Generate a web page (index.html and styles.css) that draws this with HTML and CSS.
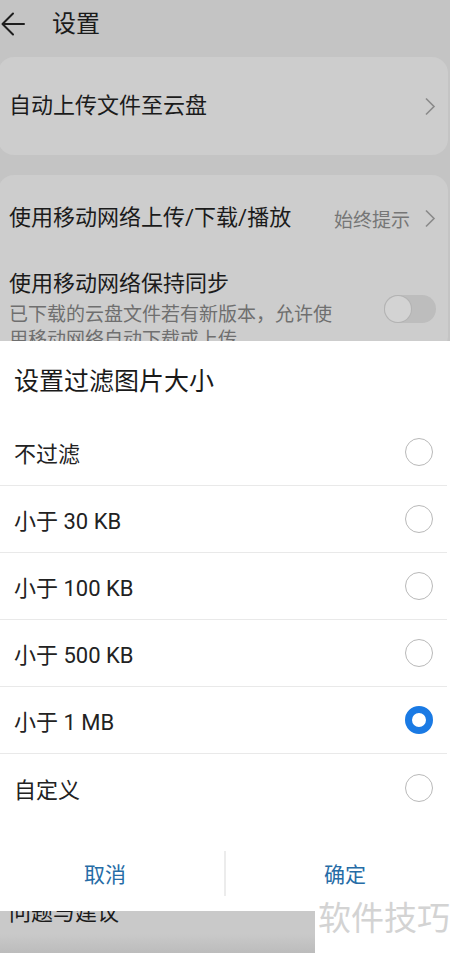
FILE: index.html
```html
<!DOCTYPE html>
<html lang="zh-CN">

<head>
  <meta charset="utf-8">
  <title>设置</title>
  <link rel="stylesheet" href="styles.css">
</head>

<body>
  <div class="behind">
    <div class="topbar">
      <svg class="back" width="26" height="26" viewBox="0 0 26 26">
        <path d="M24 13H3M13 2.5L2.5 13 13 23.5" fill="none" stroke="#1e1e1e" stroke-width="2" stroke-linecap="round" stroke-linejoin="round"/>
      </svg>
      <span class="topbar-title">设置</span>
    </div>

    <div class="card card-upload">
      <span class="row-label">自动上传文件至云盘</span>
      <svg class="chev" width="12" height="19" viewBox="0 0 12 19">
        <path d="M2 1.5l8 8-8 8" fill="none" stroke="#8a8a8a" stroke-width="1.6"/>
      </svg>
    </div>

    <div class="card">
      <div class="row row-net">
        <span class="row-label">使用移动网络上传/下载/播放</span>
        <span class="row-value">始终提示</span>
        <svg class="chev" width="12" height="19" viewBox="0 0 12 19">
          <path d="M2 1.5l8 8-8 8" fill="none" stroke="#8a8a8a" stroke-width="1.6"/>
        </svg>
      </div>
      <div class="row row-sync">
        <div class="sync-text">
          <div class="row-label">使用移动网络保持同步</div>
          <div class="row-sub">已下载的云盘文件若有新版本，允许使用移动网络自动下载或上传</div>
        </div>
        <span class="toggle"><span class="knob"></span></span>
      </div>
    </div>
  </div>

  <div class="dialog">
    <div class="dialog-title">设置过滤图片大小</div>
    <ul class="options">
      <li class="option"><span>不过滤</span><span class="radio"></span></li>
      <li class="option"><span>小于 30 KB</span><span class="radio"></span></li>
      <li class="option"><span>小于 100 KB</span><span class="radio"></span></li>
      <li class="option"><span>小于 500 KB</span><span class="radio"></span></li>
      <li class="option"><span>小于 1 MB</span><span class="radio checked"></span></li>
      <li class="option"><span>自定义</span><span class="radio"></span></li>
    </ul>
    <div class="actions">
      <button class="btn btn-cancel">取消</button>
      <span class="divider"></span>
      <button class="btn btn-ok">确定</button>
    </div>
  </div>

  <div class="bottom">
    <div class="bottom-left"><span class="bottom-label">问题与建议</span></div>
    <div class="bottom-right"></div>
  </div>

  <div class="watermark">软件技巧</div>
</body>

</html>
```

FILE: styles.css
```css
body {
  margin: 0;
  width: 450px;
  height: 953px;
  overflow: hidden;
  position: relative;
  font-family: Roboto, "Noto Sans CJK SC", sans-serif;
  background-color: #fff;
}

/* 背景里的设置页（被弹窗遮暗） */
.behind {
  height: 341px;
  overflow: hidden;
  background-color: #c4c4c4;
  color: #1b1b1b;
}
.topbar {
  height: 50px;
  display: flex;
  align-items: center;
}
.back {
  margin-top: -2px;
}
.topbar-title {
  margin-left: 26px;
  font-size: 24px;
  line-height: 30px;
  margin-top: -2px;
}
.card {
  background-color: #cdcdcd;
  border-radius: 16px;
  margin: 7px 2px 0 -2px;
}
.card + .card {
  margin-top: 20px;
}
.card-upload {
  height: 98px;
  display: flex;
  align-items: center;
  padding: 0 12px 0 11px;
}
.row-label {
  font-size: 22px;
  line-height: 30px;
  flex: 1;
}
.chev {
  flex: none;
}
.row {
  display: flex;
  align-items: center;
  padding: 0 12px 0 11px;
}
.row-net {
  height: 86px;
}
.row-value {
  font-size: 19px;
  color: #767676;
  margin-right: 14px;
}
.row-sync {
  align-items: flex-start;
  padding-top: 8px;
}
.sync-text {
  width: 335px;
  flex: none;
}
.row-sub {
  margin-top: 3px;
  font-size: 19px;
  line-height: 25px;
  color: #6f6f6f;
}
.toggle {
  margin: 26px 0 0 auto;
  width: 52px;
  height: 28px;
  border-radius: 14px;
  background-color: #bdbdbd;
  position: relative;
}
.knob {
  position: absolute;
  left: 1px;
  top: 1px;
  width: 26px;
  height: 26px;
  border-radius: 50%;
  background-color: #d3d3d3;
  box-shadow: 0 0 0 1px #b3b3b3;
}

/* 弹窗 */
.dialog {
  height: 570px;
  background-color: #fff;
  box-sizing: border-box;
  padding-top: 26px;
}
.dialog-title {
  padding-left: 14px;
  font-size: 25px;
  line-height: 30px;
  color: #1a1a1a;
}
.options {
  list-style: none;
  margin: 22px 0 0 0;
  padding: 0;
}
.option {
  height: 67px;
  box-sizing: border-box;
  display: flex;
  align-items: center;
  justify-content: space-between;
  padding: 0 17px 0 14px;
  font-size: 22px;
  color: #222;
  border-bottom: 1px solid #e9e9e9;
  margin-right: 3px;
}
.option:last-child {
  border-bottom: none;
}
.radio {
  width: 28px;
  height: 28px;
  box-sizing: border-box;
  border-radius: 50%;
  border: 1.5px solid #b9b9b9;
  margin-right: -3px;
}
.radio.checked {
  border: 7px solid #1a7ae4;
}
.actions {
  margin-top: 29px;
  height: 46px;
  display: flex;
  align-items: center;
}
.btn {
  flex: none;
  border: none;
  background: none;
  padding: 0;
  font-family: inherit;
  font-size: 21px;
  color: #266ca6;
  height: 46px;
  width: 210px;
}
.divider {
  flex: none;
  width: 2px;
  height: 45px;
  margin: 0 14px;
  background-color: #ececec;
}

/* 底部露出的部分 */
.bottom {
  height: 42px;
  display: flex;
}
.bottom-left {
  width: 315px;
  overflow: hidden;
  background: linear-gradient(#c9c9c9, #c9c9c9 55%, #bcbcbc);
}
.bottom-label {
  display: block;
  margin: -13px 0 0 9px;
  font-size: 22px;
  line-height: 30px;
  color: #1b1b1b;
}
.bottom-right {
  flex: 1;
  background-color: #fff;
}
.watermark {
  position: absolute;
  left: 318px;
  top: 900px;
  font-size: 33px;
  line-height: 38px;
  color: #d3d3d3;
}
```
